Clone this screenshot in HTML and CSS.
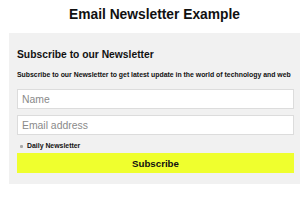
FILE: index.html
```html
<!DOCTYPE html>
<html lang="en">
<head>
    <meta charset="UTF-8">
    <title>Email Newsletter Example</title>
    <link rel="stylesheet" href="styles.css">
</head>
<body>
<div id="page">
    <h1>Email Newsletter Example</h1>
    <form class="newsletter">
        <h2>Subscribe to our Newsletter</h2>
        <p class="intro">Subscribe to our Newsletter to get latest update in the world of technology and web</p>
        <input class="field" type="text" placeholder="Name">
        <input class="field" type="text" placeholder="Email address">
        <label class="daily"><input type="checkbox" class="check">Daily Newsletter</label>
        <button type="button">Subscribe</button>
    </form>
</div>
</body>
</html>
```
FILE: styles.css
```css
html, body { margin:0; padding:0; background:#fff; overflow:hidden;}
body { font-family:"Liberation Sans", Arial, sans-serif; color:#111;}
#page { padding-left:9px;}
h1 { margin:0; padding-top:7px; height:16px; line-height:16px; font-size:13.8px; font-weight:bold; text-align:center; margin-bottom:10px;}
.newsletter { display:flex; flex-direction:column; background:#f1f1f1; padding:16px 6px 11px 8px;}
.newsletter h2 { margin:0; font-size:10.3px; line-height:12px; font-weight:bold;}
.intro { margin:10px 0 10px 0; font-size:6.9px; line-height:8px; font-weight:bold; white-space:nowrap; color:#111;}
.field { box-sizing:border-box; width:100%; height:20px; margin:0 0 6px 0; padding:0 4px; border:1px solid #dcdcdc; background:#fff; font-family:"Liberation Sans", Arial, sans-serif; font-size:10.4px; color:#333; outline:none;}
.field::placeholder { color:#8a8a8a;}
.daily { display:flex; align-items:center; height:8px; margin-top:1px; font-size:6.9px; line-height:8px; font-weight:bold;}
.check { appearance:none; -webkit-appearance:none; box-sizing:border-box; width:3px; height:3px; margin:0 4px 0 3px; border:none; background:#a8a8a8; border-radius:1px;}
button { margin-top:3px; height:20px; border:none; background:#efff2e; font-family:"Liberation Sans", Arial, sans-serif; font-size:9.7px; font-weight:bold; color:#111; padding:0;}
```
